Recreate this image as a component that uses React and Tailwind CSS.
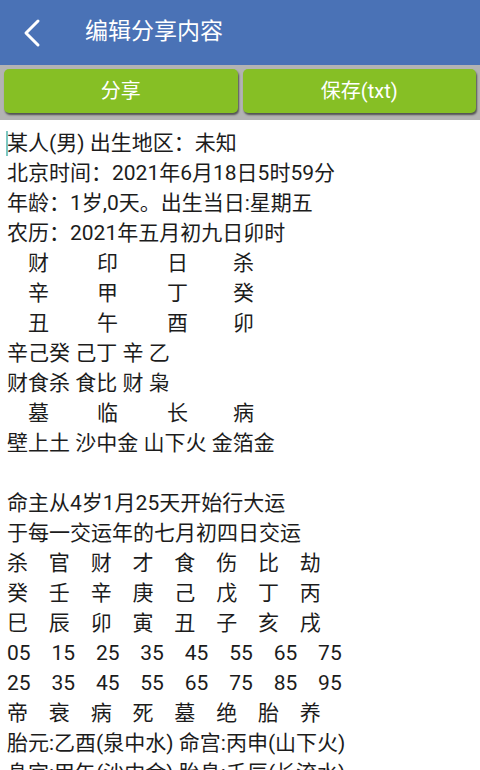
import React from 'react';

// pillar rows: four columns, first one indented one char
const pillar = (a, b, c, d) => ({ cols: [a, b, c, d] });

const lines = [
  '某人(男) 出生地区：未知',
  '北京时间：2021年6月18日5时59分',
  '年龄：1岁,0天。出生当日:星期五',
  '农历：2021年五月初九日卯时',
  pillar('财', '印', '日', '杀'),
  pillar('辛', '甲', '丁', '癸'),
  pillar('丑', '午', '酉', '卯'),
  '辛己癸 己丁 辛 乙',
  '财食杀 食比 财 枭',
  pillar('墓', '临', '长', '病'),
  '壁上土 沙中金 山下火 金箔金',
  '\u00a0',
  '命主从4岁1月25天开始行大运',
  '于每一交运年的七月初四日交运',
  '杀    官    财    才    食    伤    比    劫',
  '癸    壬    辛    庚    己    戊    丁    丙',
  '巳    辰    卯    寅    丑    子    亥    戌',
  '05    15    25    35    45    55    65    75',
  '25    35    45    55    65    75    85    95',
  '帝    衰    病    死    墓    绝    胎    养',
  '胎元:乙酉(泉中水) 命宫:丙申(山下火)',
  '身宫:甲午(沙中金) 胎息:壬辰(长流水)',
];

const colW = ['w-[69px]', 'w-[70px]', 'w-[66px]', 'w-[40px]'];

export default function App() {
  return (
    <div
      className="w-[480px] h-[770px] overflow-hidden bg-white"
      style={{ fontFamily: 'Roboto, "Noto Sans CJK SC", sans-serif' }}
    >
      <header className="h-[65px] bg-[#4a72b6] flex items-center">
        <button className="w-[64px] h-full flex items-center pl-[22px]">
          <svg width="20" height="30" viewBox="0 0 20 30" fill="none">
            <path d="M16 3 L4 15 L16 27" stroke="white" strokeWidth="3" strokeLinecap="round" strokeLinejoin="round" />
          </svg>
        </button>
        <h1 className="ml-[21px] text-white text-[23px] leading-none -mt-[2px]">编辑分享内容</h1>
      </header>

      <div className="bg-[#b3b3b3] px-[4px] pt-[4px] pb-[7px] flex gap-[5px]">
        <button className="flex-1 h-[44px] rounded-[5px] bg-[#86bf25] text-white text-[20px] shadow-[1px_2px_2px_rgba(0,0,0,0.55)]">
          分享
        </button>
        <button className="flex-1 h-[44px] rounded-[5px] bg-[#86bf25] text-white text-[20px] shadow-[1px_2px_2px_rgba(0,0,0,0.55)]">
          保存(txt)
        </button>
      </div>

      <div className="relative pt-[8px] pl-[7px] text-[21px] leading-[30px] text-[#1c1c1c]">
        <span className="absolute left-[6px] top-[11px] w-[2px] h-[25px] bg-[#7cc7c0]" />
        {lines.map((l, i) =>
          typeof l === 'string' ? (
            <div key={i} className="whitespace-pre">{l}</div>
          ) : (
            <div key={i} className="flex pl-[21px]">
              {l.cols.map((c, j) => (
                <span key={j} className={colW[j]}>{c}</span>
              ))}
            </div>
          )
        )}
      </div>
    </div>
  );
}
